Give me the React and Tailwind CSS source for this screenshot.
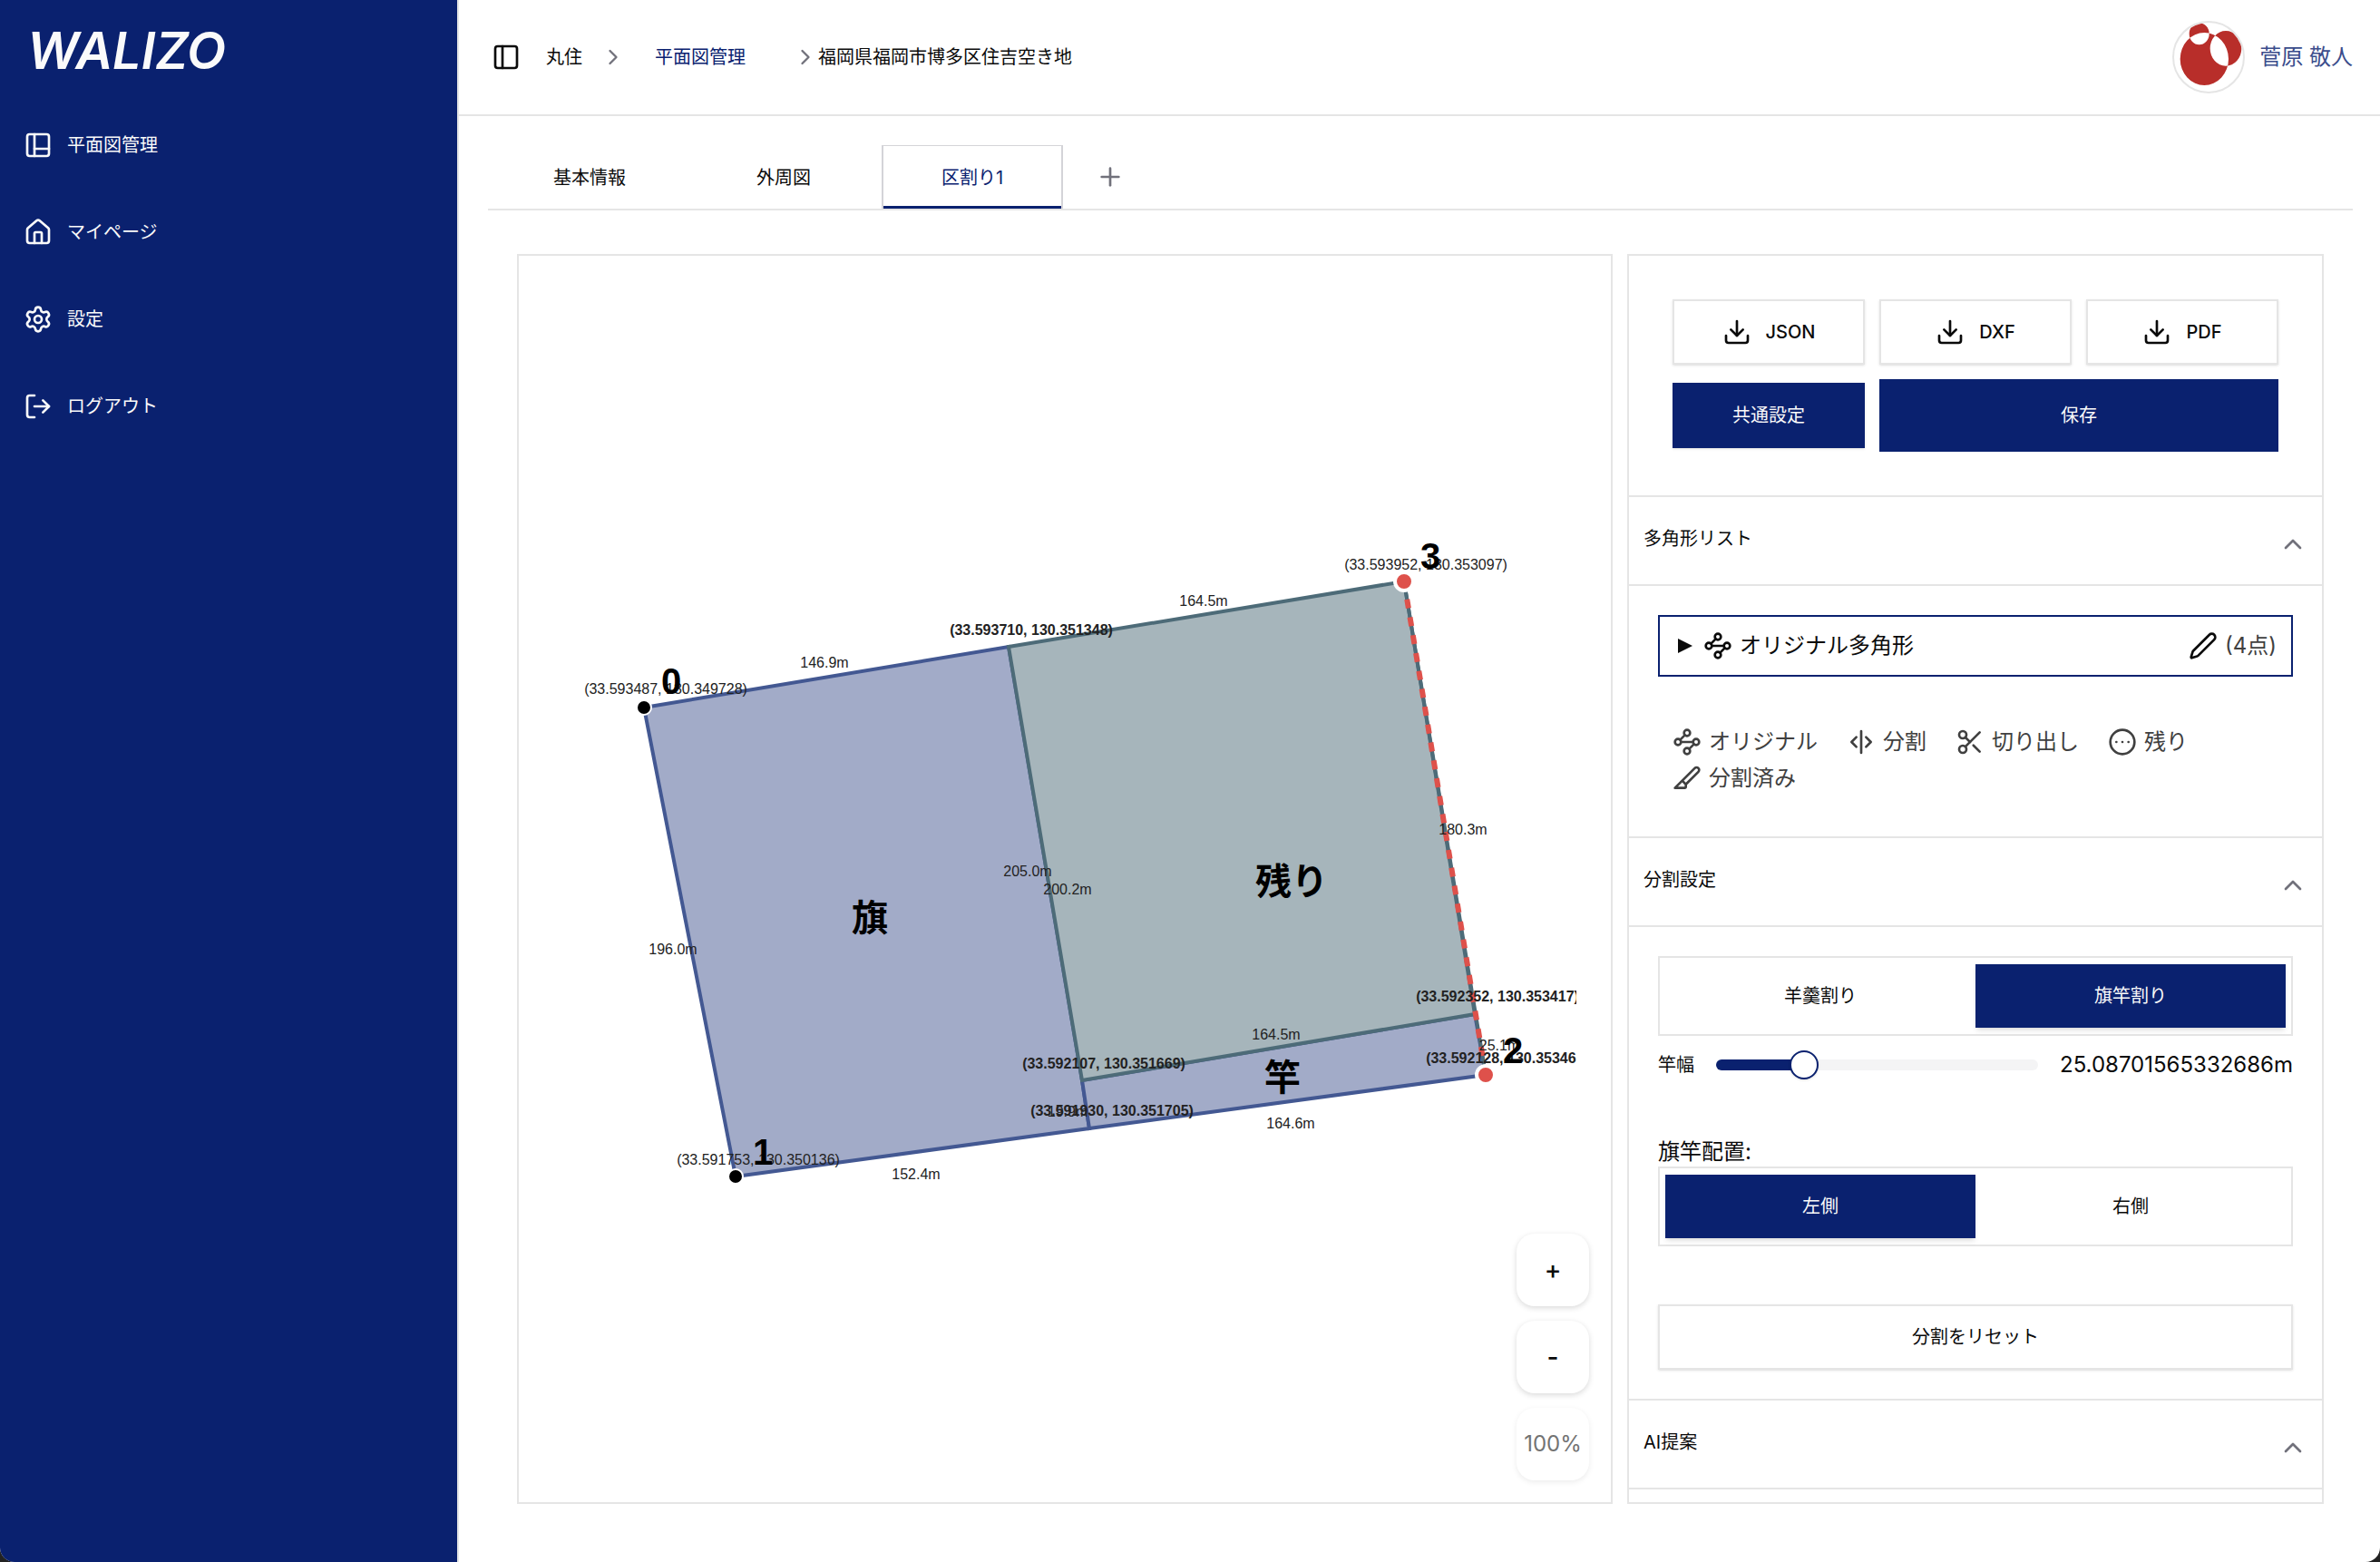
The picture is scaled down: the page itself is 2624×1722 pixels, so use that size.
import { useState } from 'react'
import {
  ChevronRight,
  ChevronUp,
  CircleEllipsis,
  Download,
  House,
  LogOut,
  PanelLeft,
  PanelsLeftBottom,
  Pen,
  Plus,
  Scissors,
  SeparatorVertical,
  Settings,
  Slice,
  Waypoints,
} from 'lucide-react'

const NAV_ITEMS = [
  { icon: PanelsLeftBottom, label: '平面図管理' },
  { icon: House, label: 'マイページ' },
  { icon: Settings, label: '設定' },
  { icon: LogOut, label: 'ログアウト' },
]

const TABS = ['基本情報', '外周図', '区割り1']

const LEGEND = [
  { icon: Waypoints, label: 'オリジナル' },
  { icon: SeparatorVertical, label: '分割' },
  { icon: Scissors, label: '切り出し' },
  { icon: CircleEllipsis, label: '残り' },
  { icon: Slice, label: '分割済み' },
]

const BLUE = { fill: '#a2abc8', stroke: '#435892' }
const GREEN = { fill: '#a6b5bb', stroke: '#4d6b78' }

const LOTS = [
  { name: '旗', points: '710,780 1112,713 1193,1191 1201,1244 811,1297', x: 959, y: 1026, ...BLUE },
  { name: '竿', points: '1193,1191 1626,1118 1638,1185 1201,1244', x: 1414, y: 1202, ...BLUE },
  { name: '残り', points: '1112,713 1548,641 1626,1118 1193,1191', x: 1424, y: 986, ...GREEN },
]

const LENGTHS = [
  { text: '146.9m', x: 909, y: 736 },
  { text: '164.5m', x: 1327, y: 668 },
  { text: '205.0m', x: 1133, y: 966 },
  { text: '200.2m', x: 1177, y: 986 },
  { text: '180.3m', x: 1613, y: 920 },
  { text: '196.0m', x: 742, y: 1052 },
  { text: '152.4m', x: 1010, y: 1300 },
  { text: '19.9m', x: 1177, y: 1231 },
  { text: '164.5m', x: 1407, y: 1146 },
  { text: '164.6m', x: 1423, y: 1244 },
  { text: '25.1m', x: 1653, y: 1158 },
]

const COORDS = [
  { text: '(33.593487, 130.349728)', x: 734, y: 765 },
  { text: '(33.593952, 130.353097)', x: 1572, y: 628 },
  { text: '(33.591753, 130.350136)', x: 836, y: 1284 },
  { text: '(33.593710, 130.351348)', x: 1137, y: 700, bold: true },
  { text: '(33.592107, 130.351669)', x: 1217, y: 1178, bold: true },
  { text: '(33.591930, 130.351705)', x: 1226, y: 1230, bold: true },
  { text: '(33.592352, 130.353417)', x: 1651, y: 1104, bold: true },
  { text: '(33.592128, 130.353463)', x: 1662, y: 1172, bold: true },
]

const VERTICES = [
  { x: 710, y: 780, labelX: 740, labelY: 765 },
  { x: 811, y: 1297, labelX: 841, labelY: 1284 },
  { x: 1638, y: 1185, labelX: 1668, labelY: 1172, selected: true },
  { x: 1548, y: 641, labelX: 1577, labelY: 627, selected: true },
]

export default function App() {
  return (
    <div className="min-h-screen bg-[#222222] font-['Inter','Noto_Sans_CJK_JP',sans-serif] text-[20px] leading-7 text-neutral-950">
      <div className="flex min-h-screen overflow-hidden rounded-b-2xl bg-white">
        <Sidebar />
        <div className="flex min-w-0 flex-1 flex-col">
          <Header />
          <main className="flex flex-1 flex-col pt-8 pr-[30px] pb-16 pl-8">
            <TabBar />
            <div className="mx-8 mt-12 grid flex-1 grid-cols-[minmax(0,1fr)_768px] gap-4">
              <PlanCanvas />
              <SidePanel />
            </div>
          </main>
        </div>
      </div>
    </div>
  )
}

function Sidebar() {
  return (
    <aside className="w-[506px] shrink-0 border-r-2 border-neutral-200 bg-[#0a216f] text-neutral-50">
      <div className="flex h-28 items-center pl-[30px] text-[56px] font-semibold italic">WALIZO</div>
      <nav>
        {NAV_ITEMS.map(({ icon: Icon, label }) => (
          <a key={label} href="#" className="flex h-24 items-center gap-4 px-[26px]">
            <Icon className="size-8" />
            {label}
          </a>
        ))}
      </nav>
    </aside>
  )
}

function Header() {
  return (
    <header className="flex h-32 items-center justify-between border-b-2 border-neutral-200 pr-[30px] pl-9">
      <div className="flex items-center">
        <button type="button" aria-label="サイドバー切り替え">
          <PanelLeft className="size-8" />
        </button>
        <span className="ml-7">丸住</span>
        <ChevronRight className="ml-5 size-7 text-zinc-500" />
        <a href="#" className="ml-8 text-[#0a216f]">平面図管理</a>
        <ChevronRight className="ml-[52px] size-7 text-zinc-500" />
        <span>福岡県福岡市博多区住吉空き地</span>
      </div>
      <a href="#" className="flex items-center gap-4 text-[24px] leading-8 text-[#3b4d8c]">
        <span className="size-20 overflow-hidden rounded-full border-2 border-neutral-200">
          <svg viewBox="6 6 228 228" className="size-full" aria-hidden="true">
            <path
              fill="#b82e2a"
              fillRule="evenodd"
              d="M26 126a80 87 0 1 1 160 0a80 87 0 1 1 -160 0zM56 43a33 36 0 1 1 66 0a33 36 0 1 1 -66 0zM125 91a52 58 0 1 1 104 0a52 58 0 1 1 -104 0z"
            />
          </svg>
        </span>
        菅原 敬人
      </a>
    </header>
  )
}

function TabBar() {
  const [active, setActive] = useState('区割り1')
  return (
    <div className="flex gap-3 border-b-2 border-neutral-200 px-[6px]" role="tablist">
      {TABS.map((tab) => (
        <button
          key={tab}
          type="button"
          role="tab"
          aria-selected={tab === active}
          onClick={() => setActive(tab)}
          className={`flex h-[70px] flex-col border-x-2 border-t ${tab === active ? 'border-zinc-300 text-[#0a216f]' : 'border-transparent'}`}
        >
          <span className="flex flex-1 items-center px-16 pt-1">{tab}</span>
          <span className={`h-[3px] w-full ${tab === active ? 'bg-[#0a216f]' : ''}`} />
        </button>
      ))}
      <button type="button" aria-label="タブを追加" className="flex w-20 items-center justify-center text-zinc-500">
        <Plus className="size-8" />
      </button>
    </div>
  )
}

function PlanCanvas() {
  return (
    <section className="relative border-2 border-neutral-200 p-[38px]">
      <svg
        viewBox="610 320 1128 1298"
        className="size-full font-['Liberation_Sans','Noto_Sans_CJK_JP',sans-serif] text-[16px]"
        textAnchor="middle"
      >
        {LOTS.map((lot) => (
          <polygon key={lot.name} points={lot.points} fill={lot.fill} stroke={lot.stroke} strokeWidth="4" />
        ))}
        {/* selected edge */}
        <line x1="1548" y1="641" x2="1638" y2="1185" stroke="#4d6b78" strokeWidth="4" />
        <line x1="1548" y1="641" x2="1638" y2="1185" stroke="#de514b" strokeWidth="6" strokeDasharray="10 10" />
        {LENGTHS.map((l) => (
          <text key={`${l.x}-${l.y}`} x={l.x} y={l.y} fill="#222222">{l.text}</text>
        ))}
        {COORDS.map((c) => (
          <text key={c.text} x={c.x} y={c.y} fill="#222222" className={c.bold ? 'font-bold' : ''}>{c.text}</text>
        ))}
        {VERTICES.map((v) => (
          <circle
            key={v.x}
            cx={v.x}
            cy={v.y}
            r={v.selected ? 10 : 8}
            fill={v.selected ? '#de514b' : '#000000'}
            stroke="#ffffff"
            strokeWidth={v.selected ? 4 : 2}
          />
        ))}
        {VERTICES.map((v, i) => (
          <text key={v.x} x={v.labelX} y={v.labelY} className="text-[40px] font-bold">{i}</text>
        ))}
        {LOTS.map((lot) => (
          <text key={lot.name} x={lot.x} y={lot.y} className="text-[40px] font-bold">{lot.name}</text>
        ))}
      </svg>
      <div className="absolute right-6 bottom-6 flex flex-col gap-4 text-[24px]">
        <button type="button" aria-label="拡大" className="size-20 rounded-[20px] bg-white text-[28px] font-medium shadow-[0_2px_6px_rgba(0,0,0,0.15)]">+</button>
        <button type="button" aria-label="縮小" className="size-20 rounded-[20px] bg-white text-[28px] font-medium shadow-[0_2px_6px_rgba(0,0,0,0.15)]">-</button>
        <button type="button" disabled className="size-20 rounded-[20px] bg-white text-neutral-500 shadow-[0_2px_6px_rgba(0,0,0,0.08)]">100%</button>
      </div>
    </section>
  )
}

function SidePanel() {
  const [width, setWidth] = useState(25.08701565332686)
  const [mode, setMode] = useState('旗竿割り')
  const [side, setSide] = useState('左側')

  return (
    <section className="border-2 border-neutral-200">
      <div className="grid grid-cols-3 items-center gap-4 p-12">
        {['JSON', 'DXF', 'PDF'].map((format) => (
          <button
            key={format}
            type="button"
            className="flex h-[72px] items-center justify-center gap-4 border-2 border-neutral-200 font-medium shadow-sm"
          >
            <Download className="size-8" />
            {format}
          </button>
        ))}
        <button type="button" className="h-[72px] bg-[#0a216f] text-neutral-50 shadow-sm">共通設定</button>
        <button type="button" className="col-span-2 h-20 bg-[#0a216f] text-neutral-50">保存</button>
      </div>

      <PanelSection title="多角形リスト">
        <div className="flex h-[68px] items-center border-2 border-[#0a216f] px-4 text-[24px] leading-8">
          <button type="button" aria-label="展開" className="w-8 pl-1">
            <svg viewBox="0 0 16 16" className="size-4" fill="currentColor" aria-hidden="true">
              <path d="M0 0L16 8L0 16z" />
            </svg>
          </button>
          <Waypoints className="mr-2 size-8" />
          オリジナル多角形
          <button type="button" aria-label="名前を編集" className="mr-2 ml-auto">
            <Pen className="size-8" />
          </button>
          <span className="text-neutral-700">(4点)</span>
        </div>
        <ul className="mt-10 flex flex-wrap gap-x-8 gap-y-2 p-4 text-[24px] leading-8 text-neutral-700">
          {LEGEND.map(({ icon: Icon, label }) => (
            <li key={label} className="flex items-center gap-2">
              <Icon className="size-8" />
              {label}
            </li>
          ))}
        </ul>
      </PanelSection>

      <PanelSection title="分割設定">
        <Segmented options={['羊羹割り', '旗竿割り']} value={mode} onChange={setMode} />
        <div className="mt-4 flex h-8 items-center gap-6">
          <label htmlFor="pole-width" className="shrink-0">竿幅</label>
          <input
            id="pole-width"
            type="range"
            min="0"
            max="100"
            step="any"
            value={width}
            onChange={(e) => setWidth(parseFloat(e.target.value))}
            style={{ backgroundImage: `linear-gradient(to right, #0a216f ${width}%, #f4f4f5 ${width}%)` }}
            className="h-3 min-w-0 flex-1 appearance-none rounded-full [&::-webkit-slider-thumb]:size-8 [&::-webkit-slider-thumb]:appearance-none [&::-webkit-slider-thumb]:rounded-full [&::-webkit-slider-thumb]:border-2 [&::-webkit-slider-thumb]:border-[#0a216f] [&::-webkit-slider-thumb]:bg-white [&::-webkit-slider-thumb]:shadow-sm"
          />
          <output htmlFor="pole-width" className="text-[24px] leading-8">{width}m</output>
        </div>
        <p className="mt-16 text-[24px] leading-8">旗竿配置:</p>
        <Segmented options={['左側', '右側']} value={side} onChange={setSide} />
        <button type="button" className="mt-16 h-[72px] w-full border-2 border-neutral-200 shadow-sm">
          分割をリセット
        </button>
      </PanelSection>

      <PanelSection title="AI提案" />
    </section>
  )
}

function PanelSection({ title, children }) {
  return (
    <div>
      <h3 className="border-y-2 border-neutral-200">
        <button type="button" className="flex h-24 w-full items-start justify-between px-4 pt-8">
          {title}
          <ChevronUp className="mt-1 size-8 text-zinc-500" />
        </button>
      </h3>
      {children && <div className="p-8">{children}</div>}
    </div>
  )
}

function Segmented({ options, value, onChange }) {
  return (
    <div className="flex h-[88px] items-center border-2 border-neutral-200 px-[6px]">
      {options.map((option) => (
        <button
          key={option}
          type="button"
          aria-pressed={option === value}
          onClick={() => onChange(option)}
          className={`h-[70px] flex-1 ${option === value ? 'bg-[#0a216f] text-neutral-50 shadow-md' : ''}`}
        >
          {option}
        </button>
      ))}
    </div>
  )
}
